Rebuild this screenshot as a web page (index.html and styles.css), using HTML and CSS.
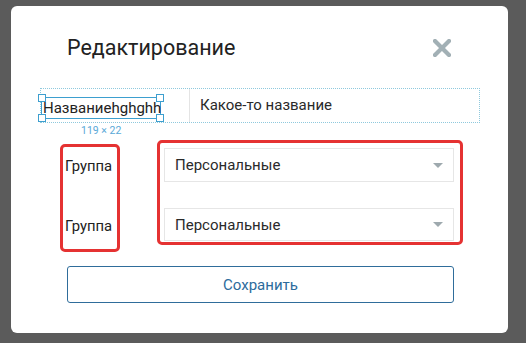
FILE: index.html
```html
<!DOCTYPE html>
<html lang="ru">
<head>
    <meta charset="UTF-8">
    <title>Редактирование</title>
    <link rel="stylesheet" href="styles.css">
</head>
<body>
    <div class="modal">
        <header class="modal-head">
            <h1>Редактирование</h1>
            <button class="close" aria-label="Закрыть">
                <svg width="18" height="18" viewBox="0 0 18 18">
                    <path d="M2 2 L16 16 M16 2 L2 16" stroke="#a2b0b5" stroke-width="4.2" stroke-linecap="square"/>
                </svg>
            </button>
        </header>

        <div class="name-row">
            <div class="name-label">
                <span>Названиеhghghh</span>
                <i class="handle tl"></i><i class="handle tr"></i>
                <i class="handle bl"></i><i class="handle br"></i>
                <em class="size-tip">119 × 22</em>
            </div>
            <div class="name-input">Какое-то название</div>
        </div>

        <section class="groups">
            <div class="labels">
                <p>Группа</p>
                <p>Группа</p>
            </div>
            <div class="selects">
                <div class="select">Персональные <b class="arrow"></b></div>
                <div class="select">Персональные <b class="arrow"></b></div>
            </div>
        </section>

        <button class="save">Сохранить</button>
    </div>
</body>
</html>
```

FILE: styles.css
```css
body {
    margin: 0;
    background: #5b5b5b;
    font-family: Roboto, "Noto Sans", sans-serif;
    color: #222;
}

.modal {
    margin: 6px 0 0 11px;
    width: 497px;
    height: 327px;
    background: white;
    border-radius: 6px;
    box-sizing: border-box;
    padding-top: 29px;
}

.modal-head {
    display: flex;
    justify-content: space-between;
    align-items: center;
    height: 24px;
    padding: 0 57px 0 56px;
}

.modal-head h1 {
    margin: 0;
    font-size: 21.5px;
    font-weight: 400;
    color: #222;
}

.close {
    background: none;
    border: none;
    padding: 0;
    width: 18px;
    height: 18px;
    margin-top: 2px;
}

.close svg {
    display: block;
}

.name-row {
    display: flex;
    align-items: center;
    margin: 29px 28px 0 29px;
    height: 35px;
    border: 1px dotted #8fc9dd;
    box-sizing: border-box;
}

.name-label {
    position: relative;
    width: 120px;
    height: 22px;
    box-sizing: border-box;
    border: 1px solid #3d9fcf;
    font-size: 15px;
    line-height: 20px;
    padding-left: 1px;
    white-space: nowrap;
    margin-top: 4px;
}

.handle {
    position: absolute;
    width: 6px;
    height: 6px;
    border: 1px solid #3d9fcf;
    background: white;
}

.handle.tl { left: -4px; top: -4px; }
.handle.tr { right: -4px; top: -4px; }
.handle.bl { left: -4px; bottom: -4px; }
.handle.br { right: -4px; bottom: -4px; }

.size-tip {
    position: absolute;
    left: 39px;
    top: 27px;
    font-style: normal;
    font-size: 10.5px;
    line-height: 12px;
    color: #5aa9d8;
}

.name-input {
    flex: 1;
    margin-left: 28px;
    align-self: stretch;
    border-left: 1px solid #e4e4e4;
    padding-left: 10px;
    font-size: 15px;
    line-height: 33px;
    color: #2a2a2a;
}

.groups {
    display: flex;
    align-items: flex-start;
    margin: 17px 0 0 49px;
}

.labels {
    margin-top: 4px;
    width: 60px;
    height: 108px;
    box-sizing: border-box;
    border: 3px solid #e53232;
    border-radius: 5px;
    padding: 10px 0 0 2px;
}

.labels p {
    margin: 0 0 42px;
    font-size: 14.8px;
    line-height: 18px;
    color: #222;
}

.selects {
    margin-left: 37px;
    width: 306px;
    height: 105px;
    box-sizing: border-box;
    border: 3px solid #e53232;
    border-radius: 5px;
    padding: 5px 6px 0 4px;
}

.select {
    display: flex;
    align-items: center;
    justify-content: space-between;
    height: 34px;
    box-sizing: border-box;
    border: 1px solid #e6e6e6;
    padding: 0 10px 0 10px;
    font-size: 15px;
    color: #2a2a2a;
    margin-bottom: 26px;
}

.select:last-child {
    margin-bottom: 0;
    height: 33px;
}

.arrow {
    width: 0;
    height: 0;
    border-left: 5px solid transparent;
    border-right: 5px solid transparent;
    border-top: 5px solid #9ea9ae;
}

.save {
    display: block;
    margin: 14px 0 0 56px;
    width: 387px;
    height: 37px;
    background: white;
    border: 1.5px solid #2f6d9b;
    border-radius: 3px;
    font-family: Roboto, "Noto Sans", sans-serif;
    font-size: 15px;
    color: #2c6b9c;
}
```
